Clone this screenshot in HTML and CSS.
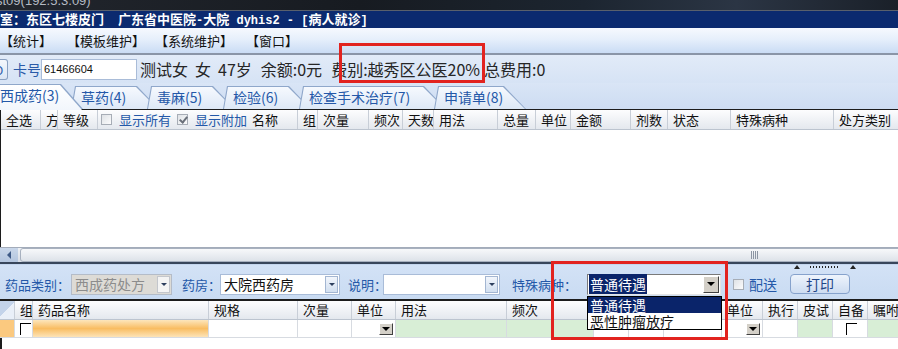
FILE: index.html
```html
<!DOCTYPE html>
<html lang="zh-CN">
<head>
    <meta charset="UTF-8">
    <title>病人就诊</title>
    <link rel="stylesheet" href="styles.css">
</head>
<body>
<div class="app">
    <div class="remote-bar"><span>st09(192.5.3.09)</span></div>
    <div class="titlebar">
        <span>室：东区七楼皮门</span>
        <span class="title-main">广东省中医院<span class="latin">-</span>大院<span class="latin"> dyhis2 - [</span>病人就诊<span class="latin">]</span></span>
    </div>
    <div class="menubar">
        <span class="menu-item m1">【统计】</span>
        <span class="menu-item m2">【模板维护】</span>
        <span class="menu-item m3">【系统维护】</span>
        <span class="menu-item m4">【窗口】</span>
    </div>

    <div class="patient">
        <div class="edge-btn">D</div>
        <span class="card-label">卡号</span>
        <div class="card-input">61466604</div>
        <span class="info i1">测试女</span>
        <span class="info i2">女</span>
        <span class="info i3">47岁</span>
        <span class="info i4">余额:0元</span>
        <span class="info i5">费别:越秀区公医20%</span>
        <span class="info i6">总费用:0</span>
    </div>

    <div class="tabs">
        <div class="tab active" style="width:93px">西成药(3)</div>
        <div class="tab" style="width:88px">草药(4)</div>
        <div class="tab" style="width:88px">毒麻(5)</div>
        <div class="tab" style="width:88px">检验(6)</div>
        <div class="tab" style="width:147px">检查手术治疗(7)</div>
        <div class="tab" style="width:92px">申请单(8)</div>
    </div>

    <div class="grid-top">
        <div class="grid-head">
            <div class="hc" style="width:40px">全选</div>
            <div class="hc" style="width:17px">方</div>
            <div class="hc" style="width:40px">等级</div>
            <div class="hc hc-opts" style="width:200px">
                <span class="chk"></span><span class="opt">显示所有</span>
                <span class="chk checked"></span><span class="opt">显示附加</span>
                <span class="opt name">名称</span>
            </div>
            <div class="hc" style="width:20px">组</div>
            <div class="hc" style="width:51px">次量</div>
            <div class="hc" style="width:34px">频次</div>
            <div class="hc" style="width:31px">天数</div>
            <div class="hc" style="width:64px">用法</div>
            <div class="hc" style="width:38px">总量</div>
            <div class="hc" style="width:35px">单位</div>
            <div class="hc" style="width:60px">金额</div>
            <div class="hc" style="width:37px">剂数</div>
            <div class="hc" style="width:63px">状态</div>
            <div class="hc" style="width:103px">特殊病种</div>
            <div class="hc" style="width:70px">处方类别</div>
        </div>
        <div class="grid-body"></div>
    </div>

    <div class="hscroll">
        <div class="arrow-btn"><span class="arrow-left"></span></div>
        <div class="thumb"><span class="grip"></span></div>
    </div>
    <div class="splitter"></div>

    <div class="filter">
        <div class="split-grip"><span class="tri"></span><span class="dots"></span><span class="tri"></span></div>
        <span class="lbl" style="width:66px">药品类别：</span>
        <div class="combo disabled" style="width:101px">
            <span class="combo-text">西成药处方</span>
            <span class="combo-btn"><span class="arrow-down"></span></span>
        </div>
        <span class="lbl" style="width:38px;margin-left:10px">药房：</span>
        <div class="combo" style="width:120px">
            <span class="combo-text">大院西药房</span>
            <span class="combo-btn"><span class="arrow-down"></span></span>
        </div>
        <span class="lbl" style="width:35px;margin-left:8px">说明：</span>
        <div class="combo" style="width:117px">
            <span class="combo-text"></span>
            <span class="combo-btn"><span class="arrow-down"></span></span>
        </div>
        <span class="lbl" style="width:75px;margin-left:12px">特殊病种：</span>
        <div class="combo classic" style="width:134px">
            <span class="combo-text"><span class="sel">普通待遇</span></span>
            <span class="combo-btn"><span class="arrow-down big"></span></span>
        </div>
        <span class="chk send"></span>
        <span class="lbl send-lbl">配送</span>
        <button class="print-btn">打印</button>
    </div>

    <div class="grid-bottom">
        <div class="grid-head low">
            <div class="hc corner" style="width:15px"></div>
            <div class="hc" style="width:18px">组</div>
            <div class="hc" style="width:176px">药品名称</div>
            <div class="hc" style="width:89px">规格</div>
            <div class="hc" style="width:54px">次量</div>
            <div class="hc" style="width:44px">单位</div>
            <div class="hc" style="width:111px">用法</div>
            <div class="hc" style="width:87px">频次</div>
            <div class="hc" style="width:35px"></div>
            <div class="hc" style="width:35px"></div>
            <div class="hc" style="width:58px"></div>
            <div class="hc" style="width:41px">单位</div>
            <div class="hc" style="width:35px">执行</div>
            <div class="hc" style="width:35px">皮试</div>
            <div class="hc" style="width:35px">自备</div>
            <div class="hc" style="width:40px">嘱咐</div>
        </div>
        <div class="grid-row">
            <div class="rc row-mark" style="width:15px"></div>
            <div class="rc" style="width:18px"><span class="flat-chk"></span></div>
            <div class="rc active-cell" style="width:176px"></div>
            <div class="rc" style="width:89px"></div>
            <div class="rc" style="width:54px"></div>
            <div class="rc right" style="width:44px"><span class="cell-btn"><span class="arrow-down big"></span></span></div>
            <div class="rc green" style="width:111px"></div>
            <div class="rc green" style="width:87px"></div>
            <div class="rc" style="width:35px"></div>
            <div class="rc" style="width:35px"></div>
            <div class="rc" style="width:58px"></div>
            <div class="rc right" style="width:41px"><span class="cell-btn"><span class="arrow-down big"></span></span></div>
            <div class="rc" style="width:35px"></div>
            <div class="rc green" style="width:35px"></div>
            <div class="rc" style="width:35px"><span class="flat-chk mid"></span></div>
            <div class="rc green" style="width:40px"></div>
        </div>
    </div>

    <div class="popup">
        <div class="popup-item selected">普通待遇</div>
        <div class="popup-item">恶性肿瘤放疗</div>
    </div>

    <div class="mark mark-fee"></div>
    <div class="mark mark-disease"></div>
</div>
</body>
</html>
```

FILE: styles.css
```css
* {
    box-sizing: border-box;
}
body {
    margin: 0;
    width: 898px;
    height: 349px;
    overflow: hidden;
    font-family: "Noto Sans CJK SC", "Liberation Sans", sans-serif;
    font-size: 13px;
    color: #111;
    background: #d7e4f5;
}
.app {
    position: relative;
    width: 898px;
    height: 349px;
    overflow: hidden;
}

/* remote desktop strip */
.remote-bar {
    height: 10px;
    overflow: hidden;
    background: linear-gradient(90deg, #22262d 0%, #171b21 40%, #1c2530 65%, #2b3544 82%, #1a2029 100%);
    color: #b4bac3;
    font-family: "Liberation Sans", sans-serif;
    font-size: 13px;
    line-height: 14px;
}
.remote-bar span {
    display: block;
    margin: -6px 0 0 -4px;
}

/* title bar */
.titlebar {
    height: 18px;
    background: #0b2a6f;
    border-top: 1px solid #59606c;
    color: #fff;
    font-weight: bold;
    font-size: 13px;
    line-height: 16px;
    white-space: nowrap;
    display: flex;
}
.title-main {
    margin-left: 14px;
}
.latin {
    font-family: "Liberation Mono", monospace;
    font-size: 12px;
}

/* menu */
.menubar {
    height: 27px;
    background: linear-gradient(#f6f9fe 0%, #e6effb 45%, #cadcf4 100%);
    border-bottom: 2px solid #8a95a7;
    display: flex;
    align-items: center;
    font-size: 13px;
    white-space: nowrap;
}
.menu-item.m1 { margin-left: 0; }
.menu-item.m2 { margin-left: 15px; }
.menu-item.m3 { margin-left: 10px; }
.menu-item.m4 { margin-left: 13px; }

/* patient line */
.patient {
    height: 28px;
    background: linear-gradient(#e2ebf8, #d6e3f5);
    display: flex;
    align-items: center;
    white-space: nowrap;
}
.edge-btn {
    width: 8px;
    height: 21px;
    border: 1px solid #8aa0c0;
    border-left: none;
    border-radius: 0 3px 3px 0;
    background: linear-gradient(#f4f7fc, #dbe5f3);
    font-size: 12px;
    line-height: 19px;
    overflow: hidden;
    text-indent: -5px;
    color: #2a5aa8;
}
.card-label {
    margin-left: 5px;
    color: #2a5aa8;
    font-size: 14px;
}
.card-input {
    margin-left: 0;
    width: 96px;
    height: 21px;
    background: #fff;
    border: 1px solid #a9bcd8;
    font-family: "Liberation Sans", sans-serif;
    font-size: 11px;
    line-height: 19px;
    padding-left: 2px;
}
.info {
    font-size: 16px;
    color: #262626;
}
.i1 { margin-left: 3px; }
.i2 { margin-left: 7px; }
.i3 { margin-left: 7px; }
.i4 { margin-left: 9px; }
.i5 { margin-left: 9px; }
.i6 { margin-left: 4px; }

/* tabs */
.tabs {
    height: 26px;
    background: linear-gradient(#d9e5f6, #cddcf2);
    display: flex;
    align-items: flex-end;
    margin-left: -3px;
}
.tab {
    position: relative;
    z-index: 1;
    height: 23px;
    margin-right: -12px;
    padding-left: 10px;
    font-size: 14px;
    line-height: 22px;
    color: #2458a8;
    white-space: nowrap;
}
.tab::before,
.tab::after {
    content: "";
    position: absolute;
    z-index: -1;
    clip-path: polygon(0 100%, 4px 0, calc(100% - 22px) 0, 100% 100%);
}
.tab::before {
    inset: 0;
    background: #8fa7ca;
}
.tab::after {
    inset: 1px 1px 0 1px;
    background: linear-gradient(#f6f9fe, #dde8f6);
}
.tab.active {
    z-index: 2;
    height: 25px;
    margin-left: -7px;
}
.tab.active::after {
    inset: 1px 1px -1px 1px;
    background: linear-gradient(#ffffff, #f2f6fc);
}

/* grids */
.grid-top {
    height: 138px;
    background: #fff;
    border-top: 1px solid #1c1c1c;
    border-left: 1px solid #1c1c1c;
}
.grid-head {
    display: flex;
    height: 20px;
    background: linear-gradient(#fdfdfe, #e4e8ee);
    border-bottom: 1px solid #bcc4cf;
    white-space: nowrap;
}
.hc {
    flex: none;
    height: 100%;
    border-right: 1px solid #c8ced7;
    padding-left: 5px;
    font-size: 13px;
    line-height: 19px;
    overflow: hidden;
}
.hc-opts {
    display: flex;
    align-items: center;
    padding-left: 3px;
}
.chk {
    display: inline-block;
    width: 11px;
    height: 11px;
    border: 1px solid #a7adb6;
    background: linear-gradient(135deg, #dfe2e6, #fbfbfc);
    position: relative;
}
.chk.checked::after {
    content: "";
    position: absolute;
    left: 3px;
    top: 0;
    width: 3px;
    height: 6px;
    border: solid #6a707a;
    border-width: 0 2px 2px 0;
    transform: rotate(40deg);
}
.opt {
    margin-left: 7px;
    margin-right: 6px;
    color: #2458a8;
}
.opt.name {
    margin-left: -1px;
    color: #111;
}
.grid-body {
    height: 117px;
}

/* scrollbar + splitter */
.hscroll {
    height: 15px;
    display: flex;
    background: linear-gradient(#eef1f5, #d9dee6);
    border-top: 1px solid #a3acba;
    overflow: hidden;
}
.arrow-btn {
    width: 18px;
    flex: none;
    background: linear-gradient(#c9d7ea, #b3c5de);
    display: flex;
    align-items: center;
    justify-content: center;
}
.arrow-left {
    width: 0;
    height: 0;
    border-top: 4px solid transparent;
    border-bottom: 4px solid transparent;
    border-right: 4px solid #3e5a86;
}
.thumb {
    margin-left: 2px;
    width: 1460px;
    flex: none;
    border: 1px solid #a8b1bf;
    border-radius: 3px;
    background: linear-gradient(#f7f8fa, #dde2e9);
    padding-left: 730px;
    display: flex;
    align-items: center;
}
.grip {
    width: 8px;
    height: 8px;
    background: repeating-linear-gradient(90deg, #8c95a3 0 1px, transparent 1px 2px);
}
.splitter {
    height: 3px;
    background: #c4d6ee;
    border-top: 2px solid #38465b;
}

/* filter line */
.filter {
    position: relative;
    height: 34px;
    background: linear-gradient(#d3e2f6, #c9dbf2);
    display: flex;
    align-items: center;
    padding: 4px 0 0 5px;
    white-space: nowrap;
}
.split-grip {
    position: absolute;
    left: 794px;
    top: -1px;
    width: 62px;
    height: 5px;
    display: flex;
    align-items: center;
    justify-content: space-between;
}
.tri {
    width: 0;
    height: 0;
    border-left: 3px solid transparent;
    border-right: 3px solid transparent;
    border-bottom: 4px solid #222;
}
.dots {
    width: 30px;
    height: 2px;
    background: repeating-linear-gradient(90deg, #222 0 1px, transparent 1px 3px);
}
.lbl {
    flex: none;
    color: #2458a8;
    font-size: 13px;
}
.combo {
    flex: none;
    height: 21px;
    background: #fff;
    border: 1px solid #a9bcd8;
    display: flex;
    align-items: center;
    justify-content: space-between;
    padding: 0 1px 0 3px;
    font-size: 14px;
}
.combo.disabled {
    background: #dddbd6;
    color: #8c8c8c;
    border-color: #b4bcc8;
}
.combo-btn {
    width: 13px;
    height: 17px;
    border: 1px solid #a3b6d2;
    background: linear-gradient(#f2f6fc, #d2dff0);
    display: flex;
    align-items: center;
    justify-content: center;
}
.combo.disabled .combo-btn {
    background: #f4f4f4;
    border-color: #c3c6cc;
}
.arrow-down {
    width: 0;
    height: 0;
    border-left: 3px solid transparent;
    border-right: 3px solid transparent;
    border-top: 3px solid #2d3f5e;
}
.arrow-down.big {
    border-left-width: 4px;
    border-right-width: 4px;
    border-top: 4px solid #000;
}
.combo.classic {
    border: 1px solid #7a7a7a;
    border-right-color: #e4e4e4;
    border-bottom-color: #e4e4e4;
    padding-left: 1px;
}
.combo.classic .combo-btn {
    width: 16px;
    height: 17px;
    background: #d4d0c8;
    border: 1px solid;
    border-color: #fff #404040 #404040 #fff;
}
.sel {
    background: #0a246a;
    color: #fff;
    padding: 0 1px;
}
.chk.send {
    margin-left: 12px;
}
.send-lbl {
    margin-left: 5px;
    font-size: 14px;
}
.print-btn {
    margin-left: 13px;
    width: 60px;
    height: 20px;
    border: 1px solid #86a2cc;
    border-radius: 4px;
    background: linear-gradient(#eef4fc, #cddcf1);
    color: #1f4688;
    font-family: inherit;
    font-size: 14px;
    line-height: 16px;
    padding: 0;
}

/* lower grid */
.grid-bottom {
    height: 50px;
    background: #fff;
    border-top: 2px solid #1c1c1c;
    border-left: 2px solid #1c1c1c;
}
.grid-head.low {
    height: 19px;
    margin-left: -2px;
}
.grid-head.low .hc {
    line-height: 18px;
}
.hc.corner {
    background: linear-gradient(135deg, #c3d3ea 50%, #e9eff8 50%);
}
.grid-row {
    display: flex;
    height: 18px;
    margin-left: -2px;
    border-bottom: 1px solid #d7dbe1;
}
.rc {
    flex: none;
    height: 100%;
    border-right: 1px solid #d7dbe1;
    display: flex;
    align-items: center;
}
.rc.right {
    justify-content: flex-end;
    padding-right: 2px;
}
.rc.row-mark {
    background: #fbc97f;
}
.rc.active-cell {
    background: linear-gradient(#fde6bc 0%, #f9bd62 50%, #fde4b8 100%);
}
.rc.green {
    background: #d8eed6;
}
.flat-chk {
    width: 11px;
    height: 12px;
    margin-left: 5px;
    border-top: 1px solid #000;
    border-left: 1px solid #000;
}
.flat-chk.mid {
    margin-left: 13px;
}
.cell-btn {
    width: 14px;
    height: 12px;
    background: #d4d0c8;
    border: 1px solid;
    border-color: #fff #404040 #404040 #fff;
    display: flex;
    align-items: center;
    justify-content: center;
}

/* dropdown list */
.popup {
    position: absolute;
    left: 587px;
    top: 296px;
    width: 135px;
    height: 34px;
    background: #fff;
    border: 1px solid #000;
    font-size: 14px;
    line-height: 16px;
}
.popup-item {
    padding-left: 2px;
    height: 16px;
}
.popup-item.selected {
    background: #0a246a;
    color: #fff;
}

/* annotation boxes */
.mark {
    position: absolute;
    border: 3px solid #e2231f;
}
.mark-fee {
    left: 339px;
    top: 43px;
    width: 146px;
    height: 40px;
}
.mark-disease {
    left: 551px;
    top: 261px;
    width: 177px;
    height: 79px;
}
```
